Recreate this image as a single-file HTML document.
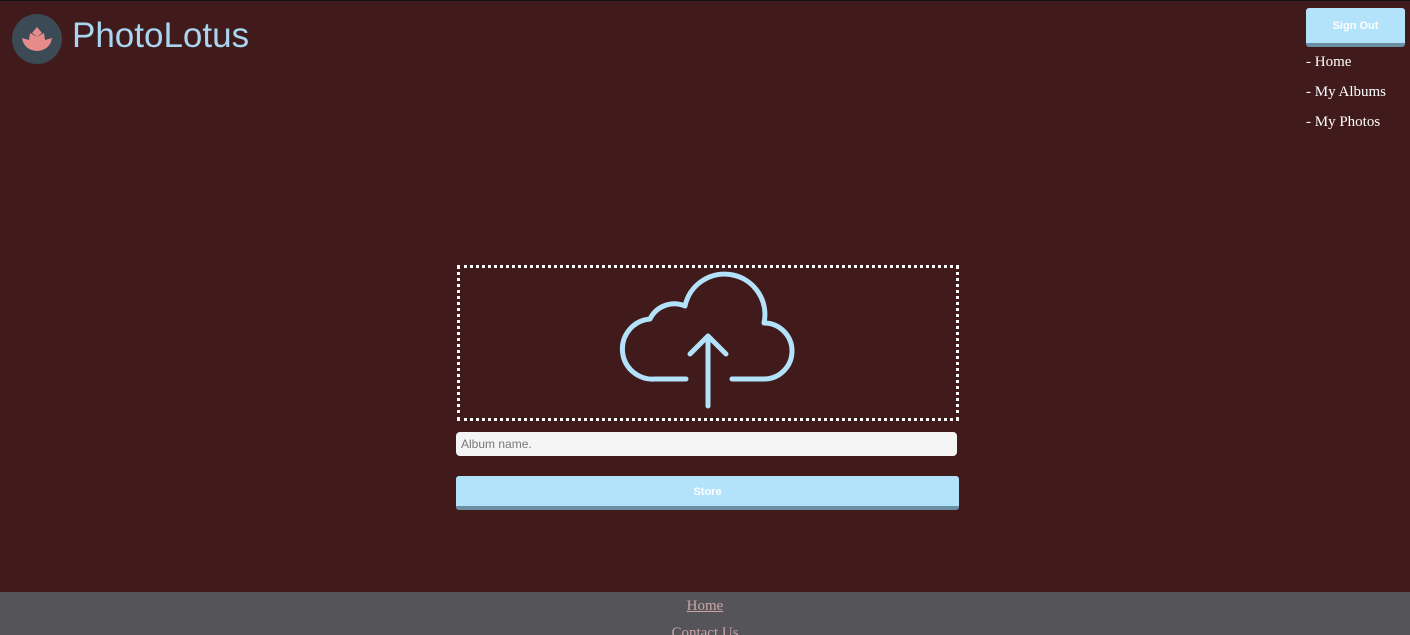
<!DOCTYPE html>
<html><head><meta charset="utf-8"><style>
html,body{margin:0;padding:0;height:635px;overflow:hidden;}
body{width:1410px;background:#411a1c;position:relative;font-family:"Liberation Sans",sans-serif;}
.a{position:absolute;}
.top{left:0;top:0;width:1410px;height:1px;background:#111;}
.title{left:72px;top:16px;font-size:35px;color:#a8d5ef;}
.signout{left:1306px;top:8px;width:99px;height:35px;background:#b3e3fb;border-bottom:4px solid #6a8fa3;border-radius:3px;color:#fff;font-size:11px;font-weight:bold;text-align:center;line-height:37px;}
.nav{left:1306px;font-family:"Liberation Serif",serif;color:#fff;font-size:15px;}
.box{left:457px;top:265px;width:496px;height:150px;border:3px dotted #fff;}
.input{left:456px;top:432px;width:501px;height:24px;background:#f5f5f5;border-radius:4px;color:#777;font-size:12px;line-height:25px;padding-left:5px;box-sizing:border-box;}
.btn{left:456px;top:476px;width:503px;height:30px;background:#b3e3fb;border-bottom:4px solid #6a8fa3;border-radius:3px;color:#fff;font-size:11px;font-weight:bold;text-align:center;line-height:33px;}
.footer{left:0;top:592px;width:1410px;height:43px;background:#555459;text-align:center;font-family:"Liberation Serif",serif;font-size:15px;color:#c9a5a8;}
</style></head><body>
<div class="a top"></div>
<svg class="a" style="left:0;top:0" width="1410" height="635">
<circle cx="37" cy="39" r="25" fill="#3b4a55"/>
<path d="M22 38 L29 40 L30 33 L37 37 L37 27 L37 37 L44 33 L45 40 L52 38 Q50 50 37 51 Q24 50 22 38Z M37 27 L32 33 L37 37 L42 33Z" fill="#e58b89"/>
<path d="M686 379 H655 A30 30 0 0 1 650 319 A27 27 0 0 1 685 306 A40 40 0 0 1 764 323 A28 28 0 0 1 764 379 H732" fill="none" stroke="#b3e3fb" stroke-width="5" stroke-linecap="round" stroke-linejoin="round"/>
<path d="M708 406 V336 M690 354 L708 336 L726 354" fill="none" stroke="#b3e3fb" stroke-width="5" stroke-linecap="round" stroke-linejoin="round"/>
</svg>
<div class="a title">PhotoLotus</div>
<div class="a signout">Sign Out</div>
<div class="a nav" style="top:54px">- Home</div>
<div class="a nav" style="top:84px">- My Albums</div>
<div class="a nav" style="top:114px">- My Photos</div>
<div class="a box"></div>
<div class="a input">Album name.</div>
<div class="a btn">Store</div>
<div class="a footer"><div style="margin-top:6px;text-decoration:underline">Home</div><div style="margin-top:10px;text-decoration:underline">Contact Us</div></div>
</body></html>
